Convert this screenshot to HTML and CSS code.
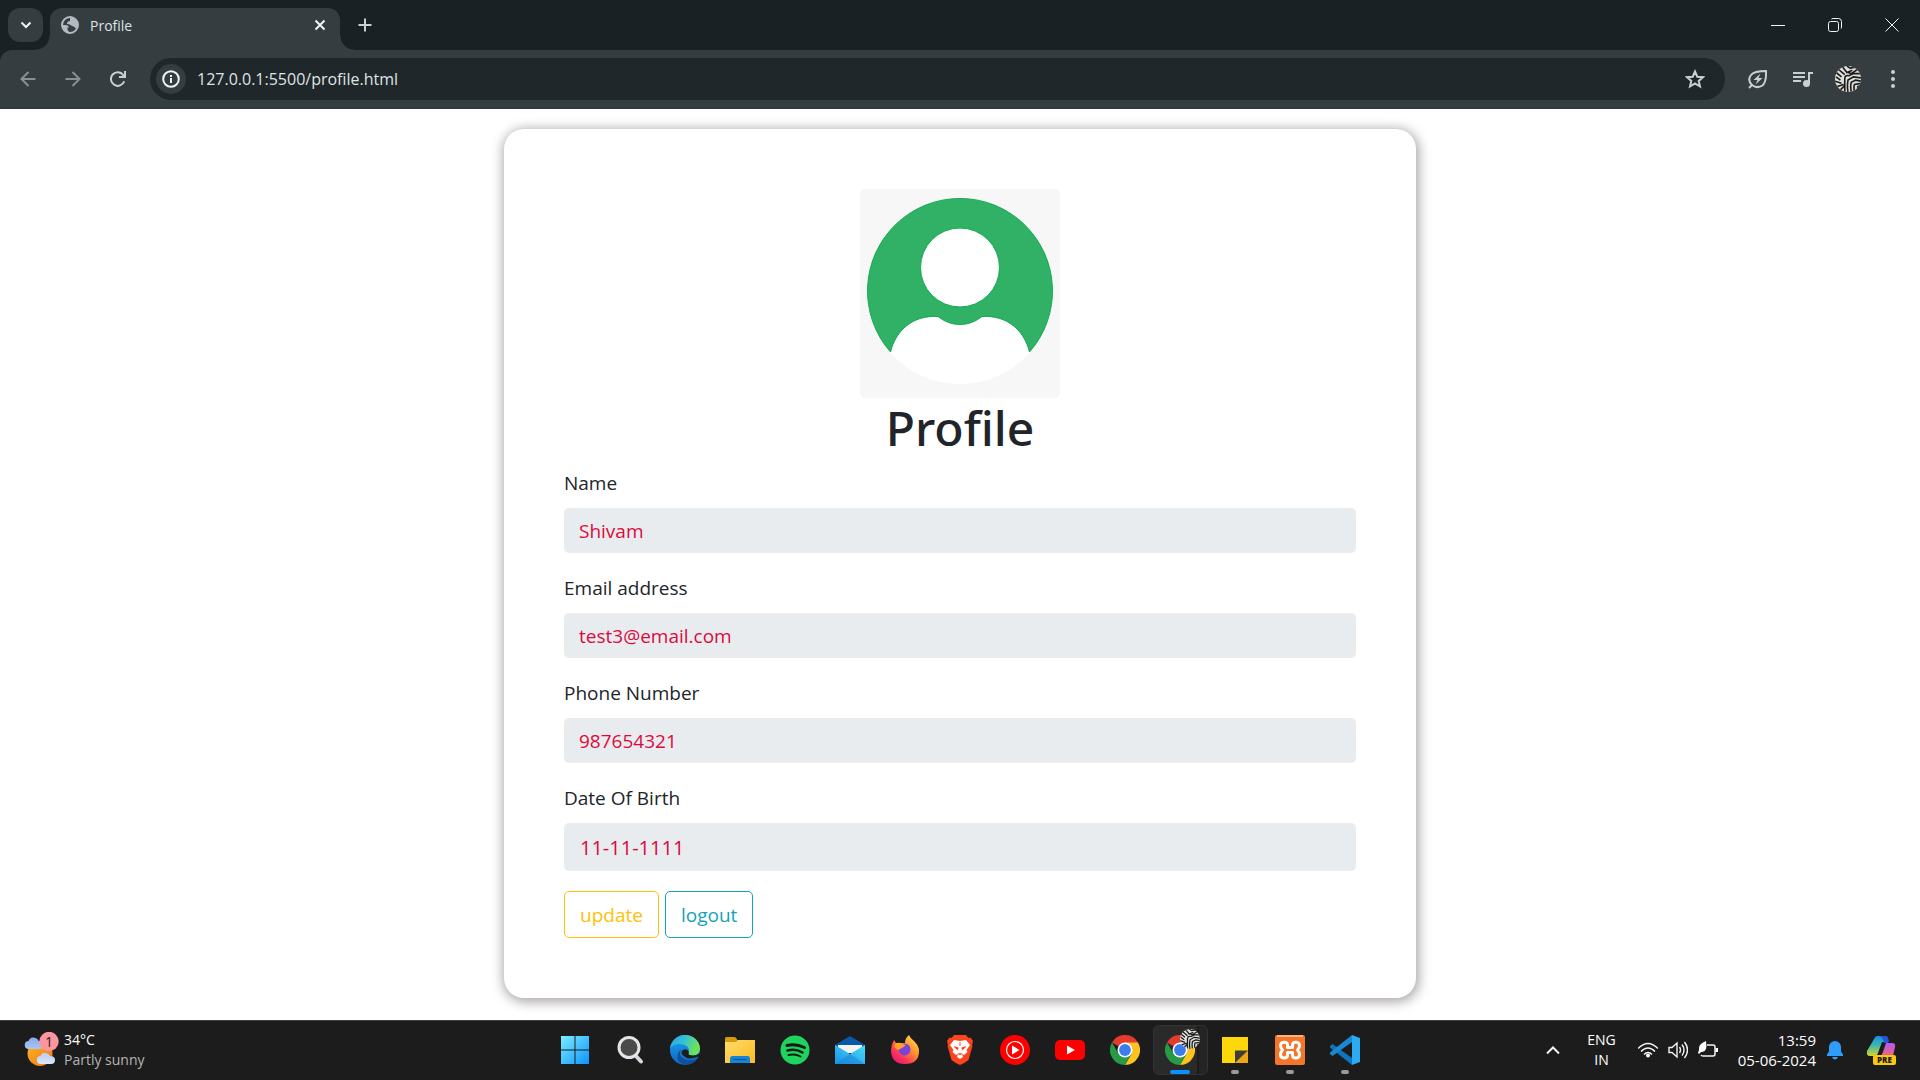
FILE: index.html
```html
<!DOCTYPE html>
<html lang="en">
<head>
<meta charset="utf-8">
<meta name="viewport" content="width=device-width, initial-scale=1">
<title>Profile</title>
<link rel="stylesheet" href="styles.css">
</head>
<body>
<svg class="defs" aria-hidden="true">
  <defs>
    <linearGradient id="win" x1="0" y1="0" x2="1" y2="1"><stop offset="0" stop-color="#7deeff"/><stop offset="1" stop-color="#0c93ff"/></linearGradient>
    <linearGradient id="edgeTop" x1="0" y1="0" x2="1" y2="0.3"><stop offset="0" stop-color="#2aa5e0"/><stop offset=".5" stop-color="#35c1d6"/><stop offset="1" stop-color="#6fe356"/></linearGradient>
    <linearGradient id="edgeLow" x1="0" y1="0" x2="0" y2="1"><stop offset="0" stop-color="#1fa4ee"/><stop offset="1" stop-color="#0967c4"/></linearGradient>
    <linearGradient id="folder" x1="0" y1="0" x2="1" y2="1"><stop offset="0" stop-color="#ffdc6b"/><stop offset="1" stop-color="#fcbb20"/></linearGradient>
    <linearGradient id="mail" x1="0" y1="1" x2="1" y2="0"><stop offset="0" stop-color="#1c93e6"/><stop offset="1" stop-color="#48dcfb"/></linearGradient>
    <linearGradient id="fox" x1="1" y1="0" x2="0.2" y2="1"><stop offset="0" stop-color="#fff04a"/><stop offset=".45" stop-color="#ff9030"/><stop offset=".8" stop-color="#fb2f5a"/><stop offset="1" stop-color="#e31587"/></linearGradient>
    <linearGradient id="sun" x1="0" y1="0" x2="1" y2="1"><stop offset="0" stop-color="#fbb72c"/><stop offset="1" stop-color="#f2760c"/></linearGradient>
    <linearGradient id="cloud" x1="0" y1="0" x2="0" y2="1"><stop offset="0" stop-color="#88a9e8"/><stop offset="1" stop-color="#dbe7fc"/></linearGradient>
    <linearGradient id="copA" x1="0" y1="0" x2="0" y2="1"><stop offset="0" stop-color="#1e8be8"/><stop offset=".45" stop-color="#36b8b0"/><stop offset="1" stop-color="#d8d42b"/></linearGradient>
    <linearGradient id="copB" x1="0" y1="0" x2="0" y2="1"><stop offset="0" stop-color="#b05cf0"/><stop offset="1" stop-color="#f4647c"/></linearGradient>
    <clipPath id="disc"><circle cx="12" cy="12" r="12"/></clipPath>
    <symbol id="zebra" viewBox="0 0 24 24">
      <g clip-path="url(#disc)">
        <path fill="#dededa" d="M0 0h24v24H0z"/>
        <path fill="none" stroke="#1b1b1b" stroke-width="1.5" d="M1 6l5 4M3 3l6 5M1 10l4 3M0 14l6 2M2 19l6-2M5 22l4-4M7 1l4 5 5-2M11 0l3 2 5-1M9 24V12q0-4 4-3l4-2 6 0M12 24q-1-5 0-11l5-3 7 1M15 24q-1-5 0-9l4-2 5 1M18 24q-1-4 0-7l6-1M21 22v-3l3-1M12 6l3 1 6-4"/>
      </g>
    </symbol>
    <symbol id="chrome" viewBox="0 0 30 30">
      <path fill="#e33b2e" d="M15 15 2 7.5A15 15 0 0 1 28 7.5z"/>
      <path fill="#fcc31e" d="M15 7.500H28A15 15 0 0 1 15 30l6.500-11.250z"/>
      <path fill="#269a45" d="M2 7.500A15 15 0 0 0 15 30l6.500-11.250L8.500 18.750z"/>
      <circle cx="15" cy="15" r="7.500" fill="#fff"/><circle cx="15" cy="15" r="5.900" fill="#3b7ded"/>
    </symbol>
  </defs>
</svg>

<header class="browser">
  <div class="tabstrip">
    <button class="tab-search" aria-label="Search tabs"><svg width="12" height="12" viewBox="0 0 12 12"><path class="line" stroke-width="2" d="M1.500 3.500 6 8l4.500-4.500"/></svg></button>
    <div class="tab">
      <svg width="18" height="18" viewBox="0 0 18 18"><circle cx="9" cy="9" r="8" fill="none" stroke="#b4bbc0" stroke-width="2"/><path fill="#b4bbc0" d="M9 1Q5 1 2.500 4L1 9h4q2.500 0 3 2.500H6.500V14L9 17q-3 .5-6-3L1 9q0-6 8-8zM9 1q4 0 7 4l1 4-2 4q-1.500-3-4-3-2-2-5-2 0-3 3-3V3z"/></svg>
      <span class="tab-title">Profile</span>
      <button class="plain" aria-label="Close tab"><svg width="12" height="12" viewBox="0 0 12 12"><path class="line" stroke-width="2" d="m1.500 1.500 9 9m0-9-9 9"/></svg></button>
    </div>
    <button class="plain new-tab" aria-label="New tab"><svg width="14" height="14" viewBox="0 0 14 14"><path class="line soft" stroke-width="2" d="M7 .5v13M.5 7h13"/></svg></button>
    <div class="window-controls">
      <button class="plain" aria-label="Minimize"><svg width="14" height="14" viewBox="0 0 14 14"><path class="line" d="M0 7.500h14"/></svg></button>
      <button class="plain" aria-label="Restore"><svg width="14" height="14" viewBox="0 0 14 14"><rect class="line" x=".5" y="3.500" width="10" height="10" rx="2"/><path class="line" d="M3.500 1q.5-.5 1.500-.5h5.500q3 0 3 3V9q0 1-.5 1.500"/></svg></button>
      <button class="plain" aria-label="Close"><svg width="14" height="14" viewBox="0 0 14 14"><path class="line" d="m.5.5 13 13m0-13-13 13"/></svg></button>
    </div>
  </div>
  <div class="toolbar">
    <button class="plain nav dim" aria-label="Back"><svg width="16" height="16" viewBox="0 0 16 16"><path class="line" stroke-width="2" d="M15.500 8H2m6.500-7-7 7 7 7"/></svg></button>
    <button class="plain nav dim" aria-label="Forward"><svg width="16" height="16" viewBox="0 0 16 16"><path class="line" stroke-width="2" d="M.5 8H14M7.500 1l7 7-7 7"/></svg></button>
    <button class="plain nav" aria-label="Reload"><svg width="16" height="16" viewBox="0 0 16 16"><path class="line soft" stroke-width="2" d="M14.200 10.200A6.800 6.800 0 1 1 13.200 4l1 1.500"/><path fill="#c9d0d4" d="M16 0v7H9V5h4.500L14 4V0z"/></svg></button>
    <div class="omnibox">
      <span class="site-info"><svg width="18" height="18" viewBox="0 0 18 18"><circle class="line" cx="9" cy="9" r="7.800" stroke-width="2"/><path class="line" stroke-width="2" d="M9 8v5M9 5v2"/></svg></span>
      <input class="url" type="text" value="127.0.0.1:5500/profile.html" aria-label="Address">
      <button class="plain" aria-label="Bookmark"><svg width="20" height="20" viewBox="0 0 20 20"><path class="line soft" stroke-width="2" d="m10 2.500 2.300 5.200 5.700.5-4.300 3.700 1.300 5.600-5-3-5 3 1.300-5.600L2 8.200l5.700-.5z"/></svg></button>
    </div>
    <div class="extras">
      <button class="plain" aria-label="Energy saver"><svg width="20" height="20" viewBox="0 0 20 20"><path class="line soft" stroke-width="2" d="M1 19l3-3q-5-5-1-10Q6 2 18 2q.5 11-3.500 14.500Q9 20 4 16"/><path fill="#c9d0d4" d="M12.500 4.500 5.500 11h4l-2 4.500 7-6.500h-4z"/></svg></button>
      <button class="plain" aria-label="Media"><svg width="20" height="16" viewBox="0 0 20 16"><path class="line soft" stroke-width="2" d="M0 2h12M0 6h12M0 10h8M16 13V2h4"/><circle cx="13.500" cy="12.500" r="3.500" fill="#c9d0d4"/></svg></button>
      <button class="plain" aria-label="Account"><svg width="26" height="26"><use href="#zebra"/></svg></button>
      <button class="plain" aria-label="Menu"><svg width="6" height="20" viewBox="0 0 6 20"><g fill="#c9d0d4"><circle cx="3" cy="3" r="2"/><circle cx="3" cy="10" r="2"/><circle cx="3" cy="17" r="2"/></g></svg></button>
    </div>
  </div>
</header>

<main class="page">
  <form class="card">
    <svg class="avatar" viewBox="0 0 200 209" role="img" aria-label="Profile picture">
      <path fill="#f7f7f7" d="M0 0h200v209H0z"/>
      <circle cx="100" cy="102" r="93" fill="#fff"/>
      <path fill="#30b165" stroke="#12aa54" d="M30.500 163A92.500 92.500 0 1 1 169.500 163C164 141 147 126 122 127.500Q112 135.500 100 135.500T78 127.500C53 126 36 141 30.500 163z"/>
      <circle cx="100" cy="78.500" r="39.500" fill="#fff" stroke="#12aa54"/>
    </svg>
    <h1>Profile</h1>
    <div class="group"><label for="name">Name</label><input id="name" type="text" value="Shivam" readonly></div>
    <div class="group"><label for="email">Email address</label><input id="email" type="email" value="test3@email.com" readonly></div>
    <div class="group"><label for="phone">Phone Number</label><input id="phone" type="tel" value="987654321" readonly></div>
    <div class="group"><label for="dob">Date Of Birth</label><input id="dob" class="date" type="text" value="11-11-1111" readonly></div>
    <div class="actions">
      <button type="button" class="btn warning">update</button>
      <button type="button" class="btn info">logout</button>
    </div>
  </form>
</main>

<footer class="taskbar">
  <div class="weather">
    <svg width="36" height="36" viewBox="0 0 36 36"><circle cx="16" cy="21.500" r="12.500" fill="url(#sun)"/><path fill="url(#cloud)" d="M5 17a4 4 0 0 1-.5-8Q6 5 9.500 5.500 14 6 14.500 9 19 9 19 13t-4 4zM17 32a4 4 0 0 1-.5-8Q18 20 22 21q3 .5 4 3 5 0 5 4t-4 4z"/><circle cx="25" cy="9.500" r="9.700" fill="#fd95a0"/><text x="25" y="15" class="badge-text">1</text></svg>
    <div class="weather-text"><span>34°C</span><span class="muted">Partly sunny</span></div>
  </div>
  <nav class="apps" aria-label="Apps">
    <button class="app" aria-label="Start"><svg width="30" height="30" viewBox="0 0 30 30"><path fill="url(#win)" d="M1 1h13.500v13.500H1zM15.500 1H29v13.500H15.500zM1 15.500h13.500V29H1zM15.500 15.500H29V29H15.500z"/></svg></button>
    <button class="app" aria-label="Search"><svg width="30" height="30" viewBox="0 0 30 30"><path stroke="#d5d9de" stroke-width="4" stroke-linecap="round" d="m20 20 6 6.500"/><circle cx="14" cy="12.500" r="10" fill="#4a4a4a" stroke="#e3e5e8" stroke-width="3"/></svg></button>
    <button class="app" aria-label="Edge"><svg width="30" height="30" viewBox="0 0 30 30"><circle cx="15" cy="15" r="15" fill="url(#edgeLow)"/><path fill="url(#edgeTop)" d="M0 13.500C1 5.500 7.500 0 15 0c9 0 15 6.500 15 13.500 0 4.500-3.500 7-7.500 7-3 0-5.500-1.500-4-3.500 1.500-2 0-6-5-7.500Q5 7.500 0 13.500z"/><path fill="#114f9d" d="M11 15q-3 6 3 9 7 3 13.500-1Q23 30 15 30 6 27 7.500 20 8.500 16 11 15z"/><path fill="#1c1c1c" d="M19 17q-2-4-6-2-3 2 0 5.500 5 5 14 1.500l3-1V18q-3 2.500-7 2.500-6 0-4-3.500z"/></svg></button>
    <button class="app" aria-label="File Explorer"><svg width="30" height="30" viewBox="0 0 30 30"><path fill="#d99a0a" d="M0 3.500Q0 2 1.500 2H9q1.500 0 2 1l1.500 2H30v10H0z"/><path fill="url(#folder)" d="M0 7h11l2-2h17v23H0z"/><path fill="#1684d6" d="M5 28v-4.500Q5 21 7.500 21h15q2.500 0 2.500 2.500V28z"/><path stroke="#0a5294" d="M8.500 24.500h13"/></svg></button>
    <button class="app" aria-label="Spotify"><svg width="30" height="30" viewBox="0 0 30 30"><circle cx="15" cy="15" r="14.500" fill="#1ed45f"/><path fill="none" stroke="#141c16" stroke-linecap="round" d="M7 10.500q9-2 17.500 2" stroke-width="3"/><path fill="none" stroke="#141c16" stroke-linecap="round" d="M7.500 15.500q8-2 15 2" stroke-width="2.500"/><path fill="none" stroke="#141c16" stroke-linecap="round" d="M8.500 20q7-1.500 12 1.500" stroke-width="2"/></svg></button>
    <button class="app" aria-label="Mail"><svg width="30" height="30" viewBox="0 0 30 30"><path fill="#0a59a8" d="M0 10 15 1l15 9v8H0z"/><path fill="#f3f3f3" d="M3 10h24v8H3z"/><path fill="url(#mail)" d="M0 10l15 9 15-9v19H0z"/><path fill="#1679d0" d="m15 19 15 10H0z" opacity=".45"/></svg></button>
    <button class="app" aria-label="Firefox"><svg width="30" height="30" viewBox="0 0 30 30"><path fill="url(#fox)" d="M4 5l2 3 4 0Q13 8 15 8q0-5 4-8 1 3 5 6 5 5 5 10 0 13-14 13T1 15Q1 10 4 5z"/><circle cx="14.500" cy="14.500" r="6" fill="#7b44d8"/><path fill="#ffa328" d="M4 12l2-4q4-1 6 1l4 1-4 3-4 2z"/></svg></button>
    <button class="app" aria-label="Brave"><svg width="30" height="30" viewBox="0 0 30 30"><path fill="#fa4420" d="M9 0h12l2.500 3 2-.5L28 6l-1 4 .5 1-4 14Q20 28 15 30q-5-2-8.500-5l-4-14L3 10 2 6l2.500-3.500 2 .5z"/><path fill="#fff" d="M9 5l6 1 6-1 4 5-3.500 5 1 2-3.500 3-2-1 1 3-3 2-3-2 1-3-2 1-3.500-3 1-2L5 10z"/><path fill="#fa4420" d="M8.500 11l5 1.500-.5 3-3-2.500zm13 0-5 1.500.5 3 3-2.500zM14.500 7h1v4h-1zM12 19l3-1 3 1-3 1z"/></svg></button>
    <button class="app" aria-label="YouTube Music"><svg width="30" height="30" viewBox="0 0 30 30"><circle cx="15" cy="15" r="15" fill="#f00"/><circle cx="15" cy="15" r="8.500" fill="none" stroke="#fff" stroke-width="1.200"/><path fill="#fff" d="m12 10.500 7.500 4.500-7.500 4.500z"/></svg></button>
    <button class="app" aria-label="YouTube"><svg width="30" height="30" viewBox="0 0 30 30"><rect y="5" width="30" height="20" rx="5" fill="#f00"/><path fill="#fff" d="m12 10.500 8 4.500-8 4.500z"/></svg></button>
    <button class="app" aria-label="Chrome"><svg width="30" height="30"><use href="#chrome"/></svg></button>
    <button class="app active" aria-label="Chrome, Profile"><svg width="40" height="36" viewBox="0 0 40 36"><use href="#chrome" x="5" y="3" width="30" height="30"/><use href="#zebra" x="20" y="-3" width="20" height="20"/></svg></button>
    <button class="app open" aria-label="Sticky Notes"><svg width="30" height="30" viewBox="0 0 30 30"><path fill="#fcd80a" d="M2 2h26v13.500L15 28H2z"/><path fill="#403c38" d="M15 15.500h13L15 28z"/><path fill="#eda514" d="M28 15.500V28H15z"/></svg></button>
    <button class="app open" aria-label="XAMPP"><svg width="30" height="30" viewBox="0 0 30 30"><rect width="30" height="30" rx="2" fill="#f4762a"/><path fill="#ffb184" d="M2 0h26v2H2z"/><path fill="none" stroke="#fff" stroke-width="3" stroke-linejoin="round" d="M12.500 12.500V9.500C12 6 5.500 6.500 5.500 10.500Q5.500 13 7.500 15 5.500 17 5.500 19.500C5.500 24 12 24 12.500 20.500V17.500h5v3C18 24 24.500 24 24.500 19.500Q24.500 17 22.500 15 24.500 13 24.500 10.500C24.500 6.500 18 6 17.500 9.500v3z"/></svg></button>
    <button class="app open" aria-label="Visual Studio Code"><svg width="30" height="30" viewBox="0 0 30 30"><path fill="#0d75bd" d="M0 11l2.500-2L22 23v7L0 12.500z"/><path fill="#1989d4" d="M0 19l2.500 2L22 7V0L0 17.500z"/><path fill="#2cabf2" d="m22 0 8 3v24l-8 3z"/></svg></button>
  </nav>
  <div class="tray">
    <button class="plain caret" aria-label="Hidden icons"><svg width="14" height="10" viewBox="0 0 14 10"><path class="line" stroke-width="2" d="m1 8.500 6-6 6 6"/></svg></button>
    <div class="lang"><span>ENG</span><span>IN</span></div>
    <div class="status">
      <svg width="20" height="18" viewBox="0 0 20 18"><path class="line" stroke-width="1.500" d="M0 7.500q10-10 20 0M3 10.500q7-7 14 0M6 13.500q4-4 8 0"/><circle cx="10" cy="14.500" r="2" fill="#fff"/></svg>
      <svg width="20" height="18" viewBox="0 0 20 18"><path class="line" stroke-width="1.400" d="M1 6.500h3l5-4.500v14l-5-4.500H1zM11.500 6q2 3 0 6M14 3.500q4 5.500 0 11M16.500 1q6 8 0 16"/></svg>
      <svg width="20" height="18" viewBox="0 0 20 18"><path class="line" stroke-width="1.500" d="M9 4h6q2 0 2 2v7q0 2-2 2H5q-1.500 0-2-1"/><path fill="#fff" d="M17.500 7H20v4h-2.500zM8 0q2 12-5 11L1 13l-1-1 1-3Q0 3 8 0z"/></svg>
    </div>
    <div class="clock"><span>13:59</span><span>05-06-2024</span></div>
    <svg class="bell" width="18" height="20" viewBox="0 0 18 20"><path fill="#2e9dfb" d="M1 16v-1.500l2-3V7a6 6 0 0 1 12 0v4.500l2 3V16zM6 17h6q-1 2.500-3 2.500T6 17z"/></svg>
    <svg class="copilot" width="30" height="30" viewBox="0 0 30 30"><path fill="url(#copA)" d="M8 4Q9 1 12 1h7q3 0 3 3l-2 3h-4L12 18q-1 3-4 3H4q-4 0-3-5z"/><path fill="#2554d8" d="M13 1h6q3 0 4 5l-1 2h-4q-1-6-5-7z"/><path fill="url(#copB)" d="M20 8h6q4 0 3 4l-2 9H14q2-1 3-4z"/><rect x="7" y="20" width="23" height="10" rx="2" fill="#fcc80d"/><text x="18.500" y="28" class="pre-text">PRE</text></svg>
  </div>
</footer>
</body>
</html>
```
FILE: styles.css
```css
* { box-sizing: border-box; }

body {
  margin: 0;
  min-height: 100vh;
  display: flex;
  flex-direction: column;
  background: #fff;
  color: #212529;
  font-family: "Open Sans", "Noto Sans", sans-serif;
  font-size: 19px;
}

button, input { font: inherit; }
svg { display: block; flex: none; }
.defs { position: absolute; width: 0; height: 0; }
.line { fill: none; stroke: #f1f3f4; }
.soft { stroke: #c9d0d4; }

.plain {
  display: flex;
  align-items: center;
  justify-content: center;
  padding: 0;
  border: 0;
  background: none;
}

/* Browser frame */
.browser { background: #1a2124; color: #dfe3e6; font-size: 14px; }

.tabstrip { display: flex; height: 50px; padding-left: 8px; }

.tab-search {
  display: flex;
  align-items: center;
  justify-content: center;
  align-self: center;
  width: 35px;
  height: 34px;
  padding: 0;
  border: 0;
  border-radius: 12px;
  background: #353d40;
}

.tab {
  position: relative;
  display: flex;
  align-items: center;
  gap: 11px;
  width: 290px;
  margin: 8px 0 0 7px;
  padding: 0 14px 8px 11px;
  border-radius: 12px 12px 0 0;
  background: #353d40;
}

.tab::before, .tab::after {
  content: "";
  position: absolute;
  bottom: 0;
  width: 14px;
  height: 14px;
}
.tab::before { right: 100%; background: radial-gradient(circle at 0 0, transparent 13px, #353d40 14px); }
.tab::after { left: 100%; background: radial-gradient(circle at 100% 0, transparent 13px, #353d40 14px); }

.tab-title { flex: 1; }
.new-tab { width: 34px; margin-left: 8px; }
.window-controls { display: flex; margin-left: auto; }
.window-controls .plain { width: 57px; }

.toolbar {
  display: flex;
  align-items: center;
  height: 59px;
  padding: 0 15px 0 5px;
  border-bottom: 2px solid #2d3a40;
  border-radius: 12px 12px 0 0;
  background: #353d40;
}

.nav { width: 45px; height: 36px; }
.dim { opacity: 0.45; }

.omnibox {
  flex: 1;
  display: flex;
  align-items: center;
  height: 42px;
  margin-left: 10px;
  padding: 0 20px 0 6px;
  border-radius: 21px;
  background: #1f272a;
}

.site-info {
  display: grid;
  place-items: center;
  width: 30px;
  height: 30px;
  border-radius: 50%;
  background: #353d40;
}

.url {
  flex: 1;
  min-width: 0;
  padding: 0 11px;
  border: 0;
  background: none;
  color: #dfe3e6;
  font-size: 16px;
  outline: 0;
}

.extras { display: flex; align-items: center; margin-left: 10px; }
.extras .plain { width: 45px; height: 36px; }
.extras .plain:last-child { margin-right: -10px; }

/* Page */
.page { flex: 1; padding: 20px 0; }

.card {
  width: 47.5%;
  min-width: 360px;
  margin: 0 auto;
  padding: 60px;
  border-radius: 20px;
  background: #fff;
  box-shadow: 1px 2px 12px 2px #aaa5a5;
}

.avatar { width: 200px; height: 209px; margin: 0 auto; border-radius: 5px; }

h1 {
  margin: 0 0 10px;
  font-family: "Noto Sans", "Open Sans", sans-serif;
  font-size: 48px;
  font-weight: 500;
  line-height: 60px;
  text-align: center;
}

.group { display: flex; flex-direction: column; gap: 10px; margin-bottom: 20px; }
.group label { line-height: 30px; }

.group input {
  width: 100%;
  height: 45px;
  padding: 0 15px;
  border: 0;
  border-radius: 5px;
  background: #e9ecef;
  color: #dc0a3c;
}

.group .date { height: 48px; padding: 0 16px; font-size: 20px; }

.actions { display: flex; gap: 6px; }

.btn {
  height: 47px;
  padding: 0 15px;
  border: 1px solid;
  border-radius: 5px;
  background: #fff;
}
.warning { color: #ffc107; }
.info { color: #17a2b8; }

/* Taskbar */
.taskbar {
  display: grid;
  grid-template-columns: 1fr auto 1fr;
  align-items: center;
  height: 60px;
  background: #1c1c1c;
  box-shadow: inset 0 1px #3a3f40;
  color: #fff;
  font-size: 14px;
  line-height: 20px;
}

.weather { display: flex; align-items: center; gap: 4px; padding-left: 24px; }
.weather-text, .lang, .clock { display: flex; flex-direction: column; }
.muted { color: #b5b5b5; }
.badge-text { font-size: 14px; text-anchor: middle; fill: #222; }

.apps { display: flex; }

.app {
  position: relative;
  display: grid;
  place-items: center;
  width: 55px;
  height: 50px;
  padding: 0;
  border: 0;
  border-radius: 6px;
  background: none;
}
.app svg { overflow: visible; }

.active {
  border: 1px solid #333;
  background: linear-gradient(90deg, #2a2a2a 43px, #1c1c1c 43px, #1c1c1c 45px, #242424 45px);
}

.active::after, .open::after {
  content: "";
  position: absolute;
  bottom: 1px;
  left: 50%;
  width: 8px;
  height: 4px;
  margin-left: -4px;
  border-radius: 2px;
  background: #9a9a9a;
}
.active::after { bottom: 0; width: 20px; margin-left: -10px; background: #0a91ff; }

.tray { display: flex; align-items: center; justify-content: flex-end; padding-right: 24px; }
.caret { width: 24px; margin-right: 22px; }
.lang { align-items: center; margin-right: 22px; }
.status { display: flex; gap: 10px; margin-right: 20px; }
.clock { align-items: flex-end; margin-right: 10px; font-size: 15px; }
.bell { margin-right: 22px; }
.pre-text { font-size: 8px; font-weight: 800; text-anchor: middle; fill: #1c1c1c; }
```
